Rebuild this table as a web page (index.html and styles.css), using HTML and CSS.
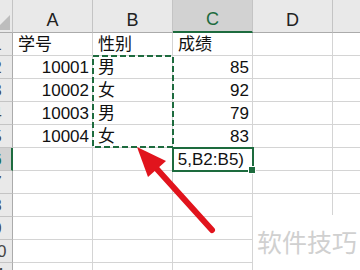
FILE: index.html
```
<!DOCTYPE html>
<html lang="zh">
<head>
    <meta charset="UTF-8">
    <meta name="viewport" content="width=device-width, initial-scale=1.0">
    <title>成绩表</title>
    <link rel="stylesheet" href="styles.css">
</head>
<body>

    <div class="sheet">
        <!-- intestazioni di colonna -->
        <div class="corner">
            <svg class="select-all" width="13" height="33" viewBox="0 0 13 33">
                <polygon points="10,15 10,30 -5,30" fill="#bdbdbd"/>
            </svg>
        </div>
        <div class="col-head">A</div>
        <div class="col-head">B</div>
        <div class="col-head col-on">C</div>
        <div class="col-head">D</div>
        <div class="col-head">E</div>

        <div class="row-head"><span>1</span></div>
        <div class="cell">学号</div>
        <div class="cell">性别</div>
        <div class="cell">成绩</div>
        <div class="cell"></div>
        <div class="cell"></div>

        <div class="row-head"><span>2</span></div>
        <div class="cell num">10001</div>
        <div class="cell">男</div>
        <div class="cell num">85</div>
        <div class="cell"></div>
        <div class="cell"></div>

        <div class="row-head"><span>3</span></div>
        <div class="cell num">10002</div>
        <div class="cell">女</div>
        <div class="cell num">92</div>
        <div class="cell"></div>
        <div class="cell"></div>

        <div class="row-head"><span>4</span></div>
        <div class="cell num">10003</div>
        <div class="cell">男</div>
        <div class="cell num">79</div>
        <div class="cell"></div>
        <div class="cell"></div>

        <div class="row-head"><span>5</span></div>
        <div class="cell num">10004</div>
        <div class="cell">女</div>
        <div class="cell num">83</div>
        <div class="cell"></div>
        <div class="cell"></div>

        <div class="row-head row-on"><span>6</span></div>
        <div class="cell"></div>
        <div class="cell"></div>
        <div class="cell active"><span>=SUMPRODUCT(1/COUNTIF(B2:B5,B2:B5)</span></div>
        <div class="cell"></div>
        <div class="cell"></div>

        <div class="row-head"><span>7</span></div>
        <div class="cell"></div>
        <div class="cell"></div>
        <div class="cell"></div>
        <div class="cell"></div>
        <div class="cell"></div>

        <div class="row-head"><span>8</span></div>
        <div class="cell"></div>
        <div class="cell"></div>
        <div class="cell"></div>
        <div class="cell"></div>
        <div class="cell"></div>

        <div class="row-head"><span>9</span></div>
        <div class="cell"></div>
        <div class="cell"></div>
        <div class="cell"></div>
        <div class="cell"></div>
        <div class="cell"></div>

        <div class="row-head"><span>10</span></div>
        <div class="cell"></div>
        <div class="cell"></div>
        <div class="cell"></div>
        <div class="cell"></div>
        <div class="cell"></div>

        <div class="row-head"><span>11</span></div>
        <div class="cell"></div>
        <div class="cell"></div>
        <div class="cell"></div>
        <div class="cell"></div>
        <div class="cell"></div>

        <!-- area copiata B2:B5 (bordo tratteggiato) -->
        <svg class="copy-range" width="82" height="93" viewBox="0 0 82 93">
            <rect x="1" y="1" width="80" height="91" fill="none" stroke="#1d6b3e" stroke-width="2" stroke-dasharray="6 3"/>
        </svg>

        <!-- freccia rossa -->
        <svg class="arrow" width="360" height="270" viewBox="0 0 360 270">
            <line x1="212" y1="230" x2="156" y2="168" stroke="#e1141d" stroke-width="6" stroke-linecap="round"/>
            <polygon points="137,147 166,161 148,177" fill="#e1141d"/>
        </svg>

        <div class="mark">软件技巧</div>
    </div>

</body>
</html>
```

FILE: styles.css
```
* {
    margin: 0;
    padding: 0;
    box-sizing: border-box;
}

body {
    background: white;
    width: 360px;
    height: 270px;
    overflow: hidden;
    font-family: "Liberation Sans", "Noto Sans CJK SC", sans-serif;
}

/* griglia del foglio: colonna numeri + colonne A-E */
.sheet {
    position: relative;
    width: 360px;
    height: 270px;
    overflow: hidden;
    display: grid;
    grid-template-columns: 13px repeat(5, 80px);
    grid-template-rows: 33px repeat(11, 23px);
}

.corner {
    background: #e9e9e9;
    border-right: 1px solid #c4c4c4;
    border-bottom: 1px solid #ababab;
}

.select-all {
    display: block;
}

.col-head {
    background: #e9e9e9;
    border-right: 1px solid #c4c4c4;
    border-bottom: 1px solid #ababab;
    color: #222;
    font-size: 18px;
    display: flex;
    align-items: flex-end;
    justify-content: center;
    padding-bottom: 1px;
}

.col-on {
    background: #d2d2d2;
    color: #1d6b3e;
    border-bottom: 2px solid #1d6b3e;
}

/* numeri di riga: la colonna è tagliata, si vede solo la parte destra */
.row-head {
    background: #e9e9e9;
    border-right: 1px solid #ababab;
    border-bottom: 1px solid #c4c4c4;
    overflow: hidden;
    font-size: 17px;
    color: #444;
    display: flex;
    align-items: flex-end;
}

.row-head span {
    flex: none;
    width: 30px;
    margin-left: -18px;
    text-align: center;
}

.row-on {
    background: #d2d2d2;
    color: #1d6b3e;
    border-right: 2px solid #1d6b3e;
}

.cell {
    border-right: 1px solid #d4d4d4;
    border-bottom: 1px solid #d4d4d4;
    font-size: 17px;
    color: #111;
    display: flex;
    align-items: flex-end;
    padding: 0 4px 0 5px;
    white-space: nowrap;
}

.num {
    justify-content: flex-end;
    padding-right: 3px;
}

/* cella attiva con la formula in scrittura */
.active {
    position: relative;
    outline: 2px solid #1d6b3e;
    outline-offset: -1px;
    justify-content: flex-end;
    padding-right: 8px;
    overflow: visible;
}

.active span {
    overflow: hidden;
    display: flex;
    justify-content: flex-end;
    max-width: 100%;
}

.active::after {
    content: "";
    position: absolute;
    right: -4px;
    bottom: -4px;
    width: 6px;
    height: 6px;
    background: #1d6b3e;
    border: 1px solid white;
}

.copy-range {
    position: absolute;
    left: 92px;
    top: 55px;
}

.arrow {
    position: absolute;
    left: 0;
    top: 0;
}

/* timbro in basso a destra */
.mark {
    position: absolute;
    left: 253px;
    top: 215px;
    width: 107px;
    height: 55px;
    background: white;
    color: #d0d0d0;
    font-family: "Noto Sans CJK SC", sans-serif;
    font-size: 25px;
    padding: 8px 0 0 4px;
    white-space: nowrap;
}
```
